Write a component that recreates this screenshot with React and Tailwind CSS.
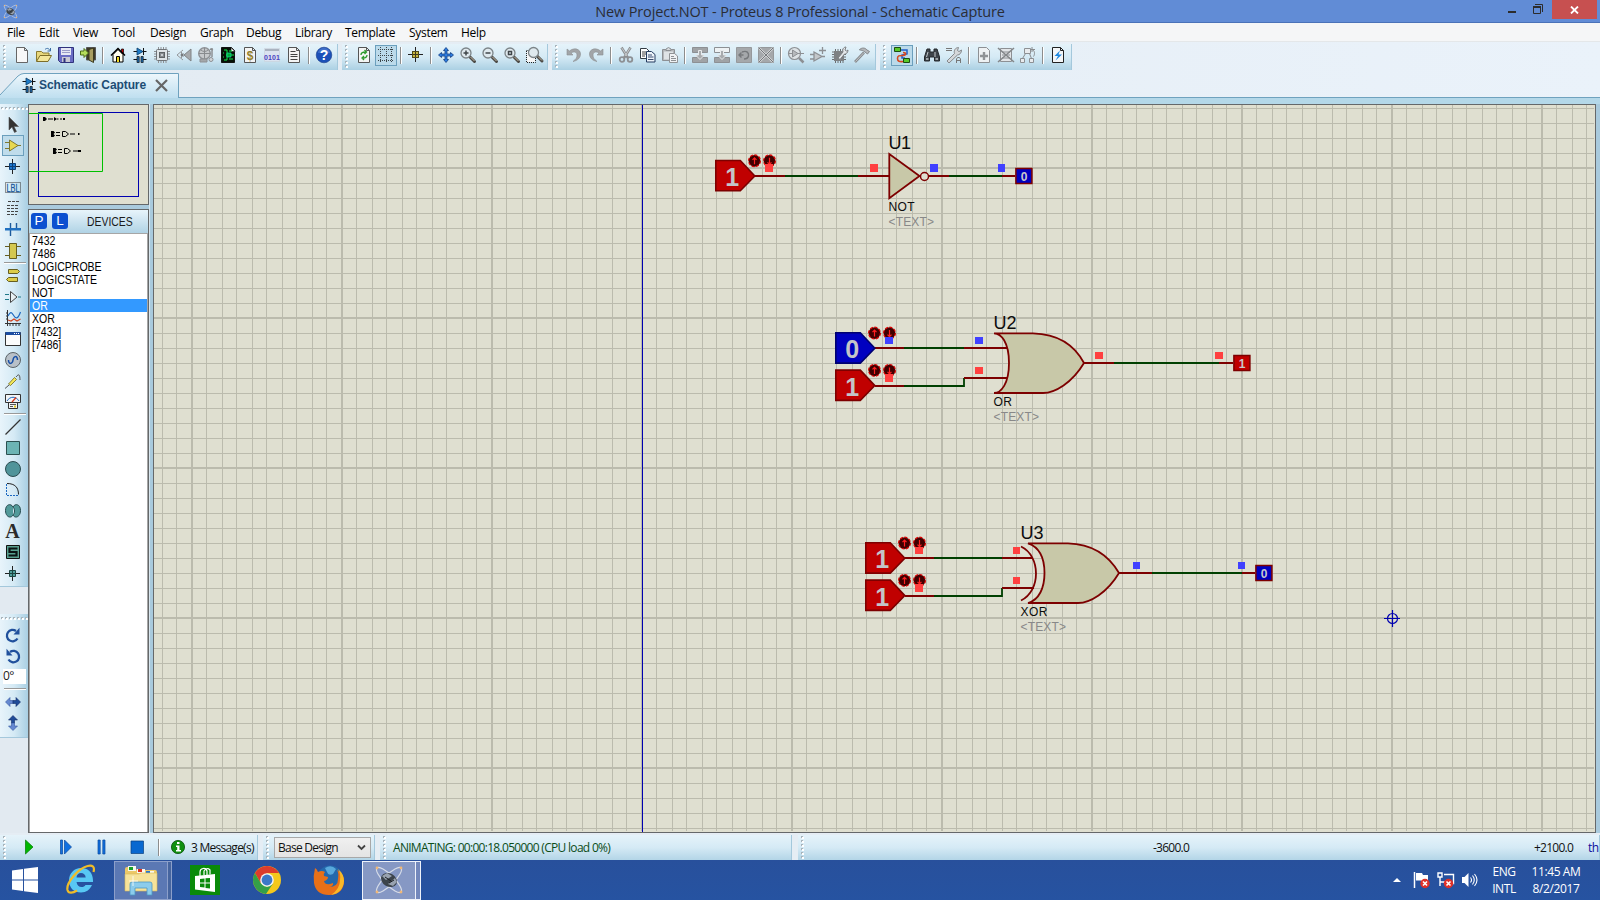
import React from "react";

const G = "#8d9094";

function Ico({ children, s = 16 }) {
  return (
    <svg width={s} height={s} viewBox="0 0 16 16" fill="none" className="shrink-0 overflow-visible">
      {children}
    </svg>
  );
}

const page = <path d="M2.5.5h8l3 3v12h-11z M10.5.5v3h3" fill="#f4f4f4" stroke="#555" />;

const icons = {
  new: <path d="M2.5.5h8l3 3v12h-11z M10.5.5v3h3" fill="#f8f8f8" stroke="#666" />,
  open: (
    <>
      <path d="M.5 14V4.500h5l1.500 1.500h6v3" fill="#e8d87c" stroke="#8a7a30" />
      <path d="M.5 14.500L4 8.500h11.500L12 14.500z" fill="#f3e79a" stroke="#7c6d28" />
      <path d="M9 2.500c2-2 4-1 5 1M14.500 1v3h-3" stroke="#3c6ea5" />
    </>
  ),
  save: (
    <>
      <path d="M.5.5h15v15h-13l-2-2z" fill="#6a6cc4" stroke="#30327c" />
      <path d="M3 1h10v7H3z" fill="#e6e8f4" />
      <path d="M4 3.500h8M4 5.500h8" stroke="#9a9cc8" />
      <path d="M4 10h8v5H4z" fill="#c8c8d4" />
      <path d="M5.500 11h2v4h-2z" fill="#30327c" />
    </>
  ),
  exit: (
    <>
      <path d="M6.500.5h9v12.500h-9z" fill="#3c3a28" stroke="#555" />
      <path d="M9 2.500l4.500-1.500v14.500L9 13z" fill="#a89e62" stroke="#3c3a20" />
      <path d="M.5 4h3.500V1.500L8.500 6 4 10.500V8H.5z" fill="#b4dc5c" stroke="#4a6a18" />
    </>
  ),
  home: (
    <>
      <path d="M11.500 2h2v5h-2z" fill="#d00000" stroke="#000" strokeWidth=".7" />
      <path d="M3 7.500L8 2.500l5 5v7.500H3z" fill="#fffef0" stroke="#000" />
      <path d="M1 8.500L8 1.500l7 7" stroke="#000" strokeWidth="1.500" />
      <path d="M6.500 15V9.500h3V15" fill="#f0d820" stroke="#000" />
    </>
  ),
  schem: (
    <>
      <path d="M1.500 4.500h13M1.500 12.500h4M11 12.500h3.500M11.500 1v7" stroke="#111" />
      <path d="M5 1l6 3.500L5 8z" fill="#1e7cc8" stroke="#0a3c68" strokeWidth=".8" />
      <path d="M5 9.500h2.200v6H5zM9 9.500h2.200v6H9z" fill="#1e6cb0" stroke="#111" strokeWidth=".7" />
    </>
  ),
  chip: (
    <>
      <path d="M4.500 0v16M7 0v16M9.500 0v16M12 0v16M0 4.500h16M0 7h16M0 9.500h16M0 12h16" stroke={G} />
      <rect x="2.500" y="2.500" width="11" height="11" rx="1" fill="#dfe4e7" stroke="#707478" />
      <rect x="5.500" y="5.500" width="5" height="5" fill="#85898d" stroke="#5f6366" />
      <path d="M7 7h2v2H7z" fill="#c8ccd0" />
    </>
  ),
  three: (
    <>
      <path d="M15 2v12L8 8z" fill="#a6a9ac" stroke="#808386" />
      <path d="M7 3L1 8l6 5M5.500 5v6" stroke="#94979a" />
      <path d="M7.500 6v4L4 8z" fill="#75787c" />
    </>
  ),
  gerber: (
    <>
      <circle cx="6.500" cy="6.500" r="5.800" fill="#c6c9cc" stroke={G} strokeWidth="1.400" />
      <path d="M1 6.500h11M6.500 1v11M3 3c2 2 5 2 7 0" stroke="#888b8e" />
      <path d="M14 1v9M12 2l3 1" stroke="#888b8e" strokeWidth="1.400" />
      <path d="M2 12h7v3H2z" fill="#a4a7aa" stroke={G} />
      <circle cx="13" cy="12.500" r="2" fill="#d2d5d8" stroke={G} />
    </>
  ),
  pcb: (
    <>
      <path d="M1.500.5h10l3 3v12h-13z" fill="#061006" stroke="#111" />
      <path d="M11 .5l4 4h-4z" fill="#f4f4f4" stroke="#111" strokeWidth=".6" />
      <path d="M4 3h3v10H4M9 4h3M9 12h4M4 6h-1M4 10h-1M6 8h8" stroke="#10e848" />
      <path d="M7 6h4v4H7z" fill="#0a3" stroke="#0ee8a0" strokeWidth=".7" />
    </>
  ),
  bom: (
    <>
      {page}
      <text x="8" y="12.500" fontSize="12" fontWeight="700" textAnchor="middle" fill="#94812a" fontFamily="Liberation Sans, sans-serif">$</text>
    </>
  ),
  code: (
    <>
      <path d="M.5 1.500h15v13H.5z" fill="#dbe3f0" stroke="#c8d0d8" strokeWidth=".6" />
      <path d="M1 2h14v2H1z" fill="#aab3c0" />
      <text x="8" y="13" fontSize="7" fontWeight="700" textAnchor="middle" fill="#4a40c0" textLength="16" fontFamily="Liberation Sans, sans-serif">0101</text>
    </>
  ),
  note: (
    <>
      {page}
      <path d="M4.500 4.500h5M4.500 7.500h7M4.500 9.500h7M4.500 12.500h7" stroke="#444" />
    </>
  ),
  help: (
    <>
      <circle cx="8" cy="8" r="7.800" fill="#1c50b8" stroke="#183c88" strokeWidth=".6" />
      <path d="M2 6a6 5 0 0112 0" fill="#5884d4" opacity=".6" />
      <text x="8" y="13" fontSize="14" fontWeight="700" textAnchor="middle" fill="#fff" fontFamily="Liberation Sans, sans-serif">?</text>
    </>
  ),
  refresh: (
    <>
      {page}
      <path d="M5 8c0-2.500 2-3 4.500-3M8.500 3l2 2-2 2M11 8c0 2.500-2 3-4 3M8 9l-2 2 2 2" stroke="#2c9a2c" strokeWidth="1.300" />
    </>
  ),
  grid: <path d="M0 2.500h16M0 8.500h16M0 13.500h16M2.500 0v16M8.500 0v16M13.500 0v16" stroke="#3c4448" strokeDasharray="1 1" shapeRendering="crispEdges" />,
  origin: (
    <>
      <path d="M0 7.500h15M7.500 0v15" stroke="#222" />
      <rect x="4.500" y="4.500" width="6" height="6" fill="#c8b840" stroke="#504818" />
      <path d="M7.500 5v5M5 7.500h5" stroke="#40381c" />
    </>
  ),
  pan: (
    <path
      d="M8 .5l2.500 3H9v3.500h3.500V5.500l3 2.500-3 2.500V9H9v3.500h1.500L8 15.500l-2.500-3H7V9H3.500v1.500L.5 8l3-2.500V7H7V3.500H5.500z"
      fill="#2c7ce0"
      stroke="#123c80"
      strokeWidth=".8"
    />
  ),
  zin: <Mag mark="M3.500 6h5M6 3.500v5" />,
  zout: <Mag mark="M3.500 6h5" />,
  zall: <Mag mark="M4.500 4.500h3v3h-3z" />,
  zarea: (
    <>
      <path d="M1 4h8v11H1z" fill="#f6f6f6" />
      <path d="M.5 4v11.500h9V11M.5 3.500h3" stroke="#222" strokeDasharray="1 1" />
      <g transform="translate(1.500 -.5)"><Mag mark="" /></g>
    </>
  ),
  undo: <path d="M1 2l0 6h6L5 6c3-2 6-1 6 2s-1 4-4 6.500c5-1 7.500-4 7.500-7.500C14.500 2 8-0 3.500 4z" fill="#a2a5a8" stroke="#8b8e91" strokeWidth=".6" />,
  redo: <path d="M15 2v6H9l2-2C8 4 5 5 5 8s1 4 4 6.500C4 13.500 1.500 10.500 1.500 7 1.500 2 8 0 12.500 4z" fill="#a2a5a8" stroke="#8b8e91" strokeWidth=".6" />,
  cut: (
    <>
      <path d="M3.500.5L10 11M12.500.5L6 11" stroke="#8b8e91" strokeWidth="2.600" />
      <path d="M3.500.5L9 9M12.500.5L7 9" stroke="#d8dadc" strokeWidth=".8" />
      <circle cx="4" cy="12.500" r="2.300" stroke={G} strokeWidth="1.800" />
      <circle cx="12" cy="12.500" r="2.300" stroke={G} strokeWidth="1.800" />
    </>
  ),
  copy: (
    <>
      <path d="M.5 1.500h6l3 3v7h-9z" fill="#fff" stroke="#333c44" />
      <path d="M2 5h4M2 7h4M2 9h3" stroke="#444" />
      <path d="M6.500 4.500h5l3.500 3v7.500H6.500z" fill="#eef4fa" stroke="#243c60" />
      <path d="M8 8h4M8 10h5.500M8 12.500h5.500" stroke="#384c70" />
    </>
  ),
  paste: (
    <>
      <path d="M.5 2.500h12v11H.5z" fill="#b4b7ba" stroke={G} />
      <path d="M2 4.500h9v8H2z" fill="#dfe3e6" />
      <path d="M4 3.500h5V2L6.500.5 4 2z" fill="#d6d9dc" stroke={G} />
      <path d="M7.500 6.500h5l3 2.500v6.500h-8z" fill="#f0f2f4" stroke="#909396" />
      <path d="M9 9.500h3M9 11.500h5M9 13.500h5" stroke={G} />
    </>
  ),
  blkcopy: <Blk top="#a0a3a6" />,
  blkmove: <Blk top="#eef2f4" />,
  blkrot: (
    <>
      <path d="M.5.5h15v15H.5z" fill="#a5a8ab" stroke="#96999c" />
      <path d="M3.500 8h4M5.500 5.500L3 8l2.500 2.500M6 5c5-2 7 1 6.500 4-.5 2-2 3-4.500 3" stroke="#75787b" strokeWidth="1.400" />
    </>
  ),
  blkdel: (
    <>
      <path d="M.5.5h15v15H.5z" fill="#a5a8ab" stroke="#96999c" />
      <path d="M1 1l14 14M15 1L1 15" stroke="#d4d6d8" strokeWidth="2.200" />
      <path d="M1 1l14 14M15 1L1 15" stroke="#75787b" />
    </>
  ),
  pick: (
    <>
      <circle cx="6.500" cy="6.500" r="6" fill="#dde2e5" stroke={G} strokeWidth="1.200" />
      <path d="M4.500 3l5.500 3.500L4.500 10zM1 6.500h3.500M10 6.500h6" fill="#b6b9bc" stroke={G} />
      <path d="M11 11l4.500 4.500" stroke={G} strokeWidth="2.500" />
    </>
  ),
  make: (
    <path d="M4 5l8 4.500L4 14zM0 7.500h4M0 12h4M12 9.500h3M12.500 0v7M9 3.500h7" fill="#c4c7ca" stroke={G} strokeWidth="1.300" />
  ),
  pack: (
    <>
      <path d="M3.500 2v14M6 2v14M8.500 2v14M11 2v14M0 5h14M0 7.500h14M0 10h14M0 12.500h14" stroke="#6b6e71" />
      <path d="M2 4h10v10H2z" fill="#7d8083" />
      <path d="M6 11l5-6c-1-3 1-5 3-5l-1 3 1.500 1L16 3c0 3-2 4-3.500 4L8 12.500z" fill="#e4e7ea" stroke="#7c7f82" />
    </>
  ),
  decomp: (
    <>
      <path d="M1 15l9-9.500" stroke="#888b8e" strokeWidth="2.600" />
      <path d="M1.500 14.500l8-8.500" stroke="#c8cbce" strokeWidth=".9" />
      <path d="M5.500 2.500C8 .5 11 .5 13 3l2.500 1.500-2 2.500L11 5C9 3.500 7.500 3 5.500 3z" fill="#b4b7ba" stroke="#85888b" />
    </>
  ),
  wire: (
    <>
      <path d="M6 3h7v4l-5 1v3h3" stroke="#2060c8" strokeWidth="1.500" />
      <path d="M9 5.500c4 0 3 3-.5 3s-5 0-5 3 2 3.500 6 3" stroke="#d84820" strokeWidth="1.600" />
      <path d="M.5.5h6v4h-6zM9.500 11.500h6v4h-6z" fill="#58c828" stroke="#1c4c10" />
    </>
  ),
  find: (
    <>
      <path d="M3 2h3v3h4V2h3l2.500 8v4h-5v-4h-5v4h-5v-4z" fill="#3e444a" stroke="#24282c" />
      <path d="M2.500 10l1.500-5M11 10V5" stroke="#c0c6ca" />
      <path d="M2 11h2.500v2H2zM11.500 11H14v2h-2.500z" fill="#a0a6aa" />
    </>
  ),
  assign: (
    <>
      <path d="M0 1.500h6M0 3.500h6" stroke="#777" />
      <path d="M1 14l7.500-7.500c-1-3 1-6 4-6l-1 3 1.500 1 2.500-1.500c0 3-2 5-4 5L3 16z" fill="#d4d7da" stroke="#85888b" />
      <path d="M10.500 16v-4l1-1.500h2l1 1.500v4M10.500 13.500h4" stroke="#777" />
    </>
  ),
  addsheet: (
    <>
      <path d="M2.500.5h8l3 3v12h-11z" fill="#eef1f3" stroke={G} />
      <path d="M8 5v8M4 9h8" stroke="#909396" strokeWidth="2.400" />
    </>
  ),
  delsheet: (
    <>
      <path d="M2.500 1.500h11v13h-11z" fill="#e2e5e8" stroke={G} />
      <path d="M4 5h8M4 8h8M4 11h8" stroke={G} />
      <path d="M0 1l16 14M16 1L0 15" stroke="#84878a" strokeWidth="1.600" />
    </>
  ),
  goto: (
    <>
      <path d="M4.500 1.500h6v5h-6zM.5 11.500h4v4h-4zM9.500 11.500h4v4h-4z" fill="#e8ebee" stroke={G} />
      <path d="M5.500 6.500l-3 5M9.500 6.500l2 5M12 2.500c3 1 3 5 1.500 7M12 0v5M10 2.500h5" stroke="#888b8e" />
    </>
  ),
  erc: (
    <>
      <path d="M2.500.5h8l3 3v12h-11z M10.5.5v3h3" fill="#f4f6f8" stroke="#222" />
      <path d="M10 3.500L4.500 9H8l-2.500 4.500L12 7.500H8.500z" fill="#1e88e0" />
    </>
  ),
};

function Mag({ mark }) {
  return (
    <>
      <path d="M9.500 9.500l5 5" stroke="#4c4a46" strokeWidth="3" strokeLinecap="round" />
      <path d="M10.500 10l4 4" stroke="#c8bca8" strokeWidth="1" />
      <circle cx="6" cy="6" r="5" fill="#dfe9ee" stroke="#7c8488" strokeWidth="1.300" />
      <path d={mark} stroke="#40464a" strokeWidth="1.500" />
    </>
  );
}

function Blk({ top }) {
  return (
    <>
      <path d="M.5.5h15v5H.5z" fill={top} stroke={G} />
      <path d="M.5 10.500h15v5H.5z" fill="#a0a3a6" stroke={G} />
      <path d="M6.500 3.500h3V8H12.500l-4.500 4.500L3.500 8h3z" fill="#a8abae" stroke="#e8ebed" />
    </>
  );
}

function Btn({ name, on }) {
  return (
    <div
      className={
        on
          ? "flex h-[21px] w-[22px] shrink-0 items-start justify-center border border-[#6b9fbd] bg-[#bbdaea] pt-[1px]"
          : "flex h-[21px] w-[22px] shrink-0 items-start justify-center pt-[2px]"
      }
    >
      <Ico>{icons[name]}</Ico>
    </div>
  );
}

const Sep = () => (
  <div className="flex w-2 shrink-0 justify-center">
    <div className="h-[17px] w-[2px] border-l border-[#8d8d8d] bg-white" />
  </div>
);

const Grip = () => (
  <svg width="3" height="26" className="shrink-0">
    {[1, 5, 9, 13, 17, 21].map((y) => (
      <g key={y}>
        <rect x="0" y={y} width="2" height="2" fill="#a9b4bb" />
        <rect x="1" y={y + 1} width="2" height="2" fill="#fff" />
      </g>
    ))}
  </svg>
);

function Bar({ w, items }) {
  return (
    <div className={`${w} flex h-[26px] shrink-0 items-center border-r border-[#a4c8dc] bg-linear-to-b from-[#e5f3fa] via-[#d5eaf5] to-[#abd0e3] pb-[3px]`}>
      <div className="flex w-[11px] shrink-0 pl-[3px] pt-[2px]"><Grip /></div>
      {items.map((n, i) => (n === "|" ? <Sep key={i} /> : <Btn key={i} name={n.replace("*", "")} on={n.endsWith("*")} />))}
    </div>
  );
}

const menu = [
  ["File", "w-[32px]"], ["Edit", "w-[34px]"], ["View", "w-[39px]"], ["Tool", "w-[38px]"], ["Design", "w-[50px]"],
  ["Graph", "w-[46px]"], ["Debug", "w-[49px]"], ["Library", "w-[50px]"], ["Template", "w-[64px]"], ["System", "w-[52px]"], ["Help", "w-[40px]"],
];

const side = {
  arrow: <path d="M4 0v13l3-3 2.500 5.500 2-1L9 9.500h4.500z" fill="#333" stroke="#555" strokeWidth=".6" />,
  comp: (
    <>
      <path d="M0 4.500h5M0 10.500h5M12 7.500h4" stroke="#807830" strokeWidth="1.200" />
      <path d="M4.500 2L13 7.500l-8.500 5.500z" fill="#e8d850" stroke="#807830" />
    </>
  ),
  junction: (
    <>
      <path d="M0 7.500h15M7.500 0v15" stroke="#222" />
      <path d="M4.500 4.500h6v6h-6z" fill="#1c78d0" stroke="#0c4078" />
      <path d="M7.500 5v5M5 7.500h5" stroke="#0c4078" />
    </>
  ),
  lbl: (
    <>
      <path d="M.5 2.500h15v10H.5z" stroke="#333" strokeDasharray="1 1" />
      <text x="8" y="11.500" fontSize="10" textAnchor="middle" fill="#1c5a9c" stroke="#1c5a9c" strokeWidth=".3" textLength="13" lengthAdjust="spacingAndGlyphs" fontFamily="Liberation Sans, sans-serif">LBL</text>
    </>
  ),
  script: <path d="M3 .5h11M2 4.500h12M2 7.500h12M2 10.500h12M2 13.500h10" stroke="#444" strokeDasharray="3 1" />,
  bus: (
    <>
      <path d="M5.500 1v7M11.500 1v7M5.500 8v6" stroke="#1c5a9c" strokeWidth="1.400" />
      <path d="M0 6h16v2.500H0z" fill="#2070c0" />
    </>
  ),
  sub: (
    <>
      <path d="M0 3.500h16M0 12.500h16" stroke="#665e20" />
      <path d="M4.500.5h7v15h-7z" fill="#d4c850" stroke="#665e20" />
    </>
  ),
  term: <path d="M3.500 1.500h9l2 2-2 2h-9zM3.500 9.500h9v4h-9l-2-2z" fill="#dccc48" stroke="#665e20" />,
  pin: (
    <>
      <path d="M5.500 2.500L12 8l-6.500 5.500z" fill="#e8f0f4" stroke="#444" />
      <path d="M0 5.500h4M0 10.500h4M13 8h3" stroke="#207888" strokeWidth="1.200" />
    </>
  ),
  graph: (
    <>
      <path d="M2.500 0v16M0 13.500h16M1 3h2M1 6h2M1 9h2M5 13v3M8 13v3M11 13v3M14 13v3" stroke="#333" />
      <path d="M3 6c3-6 4-3 6 0s4 3 6.500-4" stroke="#1c68c0" strokeWidth="1.200" />
      <path d="M3 10l3 1 3-2 3 2 3.500-2" stroke="#d04420" strokeWidth="1.200" />
    </>
  ),
  tape: (
    <>
      <path d="M.5 1.500h15v13H.5z" fill="#fbfbfb" stroke="#333" />
      <path d="M.5 1h15v3H.5z" fill="#1c4ca0" />
      <path d="M9 2.500h1M11 2.500h1M13 2.500h1" stroke="#fff" />
    </>
  ),
  gen: (
    <>
      <circle cx="8" cy="8" r="7.500" fill="#b8c0c8" stroke="#5c6468" />
      <path d="M3.500 8c0 5 4 4 4.500 0s4.500-5 4.500 0" stroke="#1850a8" strokeWidth="1.500" />
    </>
  ),
  probe: (
    <>
      <path d="M0 15.500L4 12M11 4c3-4 4-2 4 3" stroke="#555" />
      <path d="M3.500 11l6-6.500 2 2-6 6z" fill="#f4e858" stroke="#706820" strokeWidth=".8" />
    </>
  ),
  meter: (
    <>
      <path d="M.5.500h15v8h-3v6h-9v-6h-3z" fill="#f2f4f6" stroke="#333" />
      <path d="M3 8.500h10" stroke="#333" />
      <path d="M2 7c3-5 9-5 12 0" stroke="#1c68c0" />
      <path d="M7 8l4-4.500" stroke="#d83418" strokeWidth="1.300" />
      <path d="M5 10.500h6M5 12.500h3" stroke="#555" />
      <path d="M9 11.500h2v2H9z" fill="#e0c820" />
    </>
  ),
  line: <path d="M.5 15.500l15-15" stroke="#333" strokeWidth="1.300" />,
  box: <path d="M1.500 1.500h13v13h-13z" fill="#6cb4b4" stroke="#2c5050" />,
  circ: <circle cx="8" cy="8" r="7.500" fill="#50949a" stroke="#2c4c50" />,
  arc: (
    <>
      <path d="M1.500 2v11.500H14" stroke="#1c68c0" strokeDasharray="2 1" />
      <path d="M2 1.500c8 0 11.500 4 11.500 11" stroke="#222" />
    </>
  ),
  path: <path d="M8 4C6 0 .5 1 .5 7.500S6 16 8 12c2 4 7.500 2 7.500-4.500S10 0 8 4z M8 4c2 2 2 6 0 8" fill="#529a9a" stroke="#284c50" />,
  text: <text x="7.500" y="14" fontSize="20" fontWeight="700" textAnchor="middle" fill="#2c2c2c" fontFamily="Liberation Serif, serif">A</text>,
  sym: (
    <>
      <path d="M1.500.500h13v13h-13z" fill="#58a090" stroke="#111" />
      <path d="M12.500 3.500h-8v3.500h7v3.500h-8" stroke="#0a1414" strokeWidth="2.200" />
    </>
  ),
  mark: (
    <>
      <path d="M0 7.500h15M7.500 0v15" stroke="#222" />
      <path d="M4.500 4.500h6v6h-6z" fill="#50a09c" stroke="#1c4440" />
      <path d="M7.500 5v5M5 7.500h5" stroke="#1c4440" />
    </>
  ),
  cw: (
    <>
      <path d="M12.500 11.500A5.700 5.700 0 1111 4" stroke="#20509c" strokeWidth="2.300" />
      <path d="M14.500.8v6.700H8.500z" fill="#20509c" />
    </>
  ),
  ccw: (
    <>
      <path d="M3.500 11.500A5.700 5.700 0 105 4" stroke="#20509c" strokeWidth="2.300" />
      <path d="M1.500.8v6.700h6z" fill="#20509c" />
    </>
  ),
  mirx: (
    <>
      <path d="M8 6.500H5V3.500L.5 8 5 12.500v-3h3z" fill="#6488d0" stroke="#3858a0" strokeWidth=".6" />
      <path d="M8 6.500h3V3.500L15.500 8 11 12.500v-3H8z" fill="#204c98" stroke="#102c68" strokeWidth=".6" />
    </>
  ),
  miry: (
    <>
      <path d="M6.500 8V5h-3L8 .5 12.500 5h-3v3z" fill="#204c98" stroke="#102c68" strokeWidth=".6" />
      <path d="M6.500 8v3h-3L8 15.500l4.500-4.500h-3V8z" fill="#6488d0" stroke="#3858a0" strokeWidth=".6" />
    </>
  ),
};

function SBtn({ name, on }) {
  return (
    <div className={on ? "flex h-[21px] w-[22px] shrink-0 items-start justify-center border border-[#6b9fbd] bg-[#bfdceb] pt-[2px]" : "flex h-[21px] w-[22px] shrink-0 items-start justify-center pt-[3px]"}>
      <Ico>{side[name]}</Ico>
    </div>
  );
}

const HSep = () => <div className="my-[1px] ml-[2px] h-[2px] w-[22px] shrink-0 border-t border-[#999] bg-white" />;

const HGrip = () => (
  <svg width="28" height="4" className="shrink-0">
    {[1, 5, 9, 13, 17, 21, 25].map((x) => (
      <g key={x}>
        <rect x={x} y="0" width="2" height="2" fill="#a9b4bb" />
        <rect x={x + 1} y="1" width="2" height="2" fill="#fff" />
      </g>
    ))}
  </svg>
);

function Sidebar() {
  return (
    <div className="flex w-7 shrink-0 flex-col bg-[#e2eaf1]">
      <div className="flex h-[483px] shrink-0 flex-col border-b border-[#a4c8dc] bg-linear-to-r from-[#e8f4fb] via-[#d5eaf5] to-[#a9cfe3] pt-[3px]">
        <HGrip />
        <div className="flex flex-col pl-[2px] pt-[3px]">
          {["arrow", "comp*", "junction", "lbl", "script", "bus", "sub", "|", "term", "pin", "graph", "tape", "gen", "probe", "meter", "|", "line", "box", "circ", "arc", "path", "text", "sym", "mark"].map((n, i) =>
            n === "|" ? <HSep key={i} /> : <SBtn key={i} name={n.replace("*", "")} on={n.endsWith("*")} />
          )}
        </div>
      </div>
      <div className="mt-[27px] flex h-[124px] shrink-0 flex-col border-b border-[#a4c8dc] bg-linear-to-r from-[#e8f4fb] via-[#d5eaf5] to-[#a9cfe3] pt-[3px]">
        <HGrip />
        <div className="flex flex-col pl-[2px] pt-[3px]">
          <SBtn name="cw" />
          <SBtn name="ccw" />
          <div className="my-[3px] ml-[1px] h-[15px] w-[23px] bg-white font-['Open_Sans',sans-serif] text-[12px] leading-[13px] tracking-[-0.5px] text-[#222]">0°</div>
          <HSep />
          <SBtn name="mirx" />
          <SBtn name="miry" />
        </div>
      </div>
    </div>
  );
}

function Overview() {
  return (
    <svg width="121" height="101" viewBox="28 104 121 101" className="shrink-0 bg-[#dfdfd0]">
      <rect x="38.500" y="112.500" width="100" height="84" fill="none" stroke="#0000b0" />
      <path d="M29 113.500h73.500v58H29" fill="none" stroke="#00c000" />
      <g fill="#000">
        <path d="M43 117h2l2 2-2 2h-2zM48 118.500h5v1h-5zM54 117l3 2-3 2zM57 118.500h1.500v1H57zM60 118.500h2v1h-2zM63 118h2v2h-2z" />
        <path d="M51 131h2.500l1.500 1.500-1.500 1.500 1.500 1.500-1.500 1.500H51zM56 132h4v1h-4zM56 135h4v1h-4zM70 133.500h5v1h-5zM78 133h1.500v2H78z" />
        <path d="M53 148h2.500l1.500 1.500-1.500 1.500 1.500 1.500-1.500 1.500H53zM58 149h4v1h-4zM58 152h4v1h-4zM73 150.500h5v1h-5zM78 150h3v2h-3z" />
      </g>
      <path d="M62.500 131.500h3l3 2.500-3 2.500h-3zM64.500 148.500h3l3 2.500-3 2.500h-3z" fill="none" stroke="#000" />
      <rect x="28.500" y="104.500" width="120" height="100" fill="none" stroke="#65686a" />
    </svg>
  );
}

const devices = ["7432", "7486", "LOGICPROBE", "LOGICSTATE", "NOT", "OR", "XOR", "[7432]", "[7486]"];

function Devices() {
  return (
    <div className="mt-1 flex min-h-0 flex-1 flex-col border border-[#65686a] bg-white">
      <div className="flex h-6 shrink-0 items-center border-b border-[#a6a6a6] bg-linear-to-b from-[#e8f4fb] to-[#b0d3e5] pl-[2px] font-['Liberation_Sans',sans-serif]">
        <div className="mb-[1px] flex h-4 w-4 items-center justify-center rounded-[3px] bg-[#0c50d0] text-[13.500px] text-white">P</div>
        <div className="mb-[1px] ml-[5px] flex h-4 w-4 items-center justify-center rounded-[3px] bg-[#0c50d0] text-[13.500px] text-white">L</div>
        <div className="ml-[19px] w-[46px] origin-left scale-x-[.8] text-[13px] text-[#1a1a1a]">DEVICES</div>
      </div>
      <div className="flex flex-1 flex-col border-x border-[#a6a6a6]">
        {devices.map((d) => (
          <div key={d} className={d === "OR" ? "h-[13px] bg-[#3399ff] pl-[2px] text-white" : "h-[13px] pl-[2px] text-black"}>
            <div className="w-[110px] origin-left scale-x-[.81] font-['Liberation_Sans',sans-serif] text-[13px] leading-[14px]">{d}</div>
          </div>
        ))}
      </div>
    </div>
  );
}

function State({ y, x, v }) {
  return (
    <g>
      <path d={`M${x} ${y - 15.5}h24.500L${x + 39} ${y}l-14.500 14.800h-24.500z`} fill={v ? "#c00000" : "#0000c0"} stroke={v ? "#7d0000" : "#000070"} strokeWidth="1.600" />
      <text x={x + 16.5} y={y + 10} fontSize="25" fontWeight="700" textAnchor="middle" fill="#c4c4c8">{v}</text>
      {[38.7, 53.7].map((dx, i) => (
        <g key={dx} transform={`translate(${x + dx} ${y - 15.2})`}>
          <circle r="5.900" fill="#400000" stroke="#e00000" strokeWidth="1.200" strokeDasharray="3 1.500" />
          <path d={i ? "M0-3V3.500M-2 1.500L0 3.500 2 1.500" : "M0 3.500V-3M-2-1L0-3 2-1"} stroke="#ff2020" strokeWidth="1.200" fill="none" />
        </g>
      ))}
    </g>
  );
}

const Dot = ({ x, y, v, w = 8, h = 7 }) => <rect x={x} y={y} width={w} height={h} fill={v ? "#ff4040" : "#4040ff"} />;

const Probe = ({ x, y, v }) => (
  <g>
    <rect x={x + 0.9} y={y - 7.5} width="16" height="15" fill={v ? "#c00000" : "#0000c0"} stroke="#7d0000" strokeWidth="1.500" />
    <text x={x + 9} y={y + 4.5} fontSize="12" fontWeight="700" textAnchor="middle" fill="#c8c8cc">{v}</text>
  </g>
);

const Label = ({ x, y, ref1, name, w1, w2 }) => (
  <g>
    <text x={x} y={y} fontSize="18" textLength={w1} fill="#0c0c0c">{ref1}</text>
    <text x={x} y={name.y} fontSize="12" textLength={w2} fill="#0c0c0c">{name.t}</text>
    <text x={x} y={name.y + 14.5} fontSize="12" textLength="45.5" fill="#888">{"<TEXT>"}</text>
  </g>
);

const majors = [192, 342, 492, 642, 792, 942, 1092, 1242, 1392, 1542];
const offs = [14, 30, 44, 60, 74, 90, 104, 120, 134];

function Canvas() {
  const vs = [];
  [42, ...majors].forEach((m) => offs.forEach((o) => m + o > 154 && m + o < 1594 && vs.push(m + o)));
  const hs = [];
  for (let y = 108; y < 831; y += 15) hs.push(y);
  return (
    <svg width="1443" height="729" viewBox="153 104 1443 729" className="shrink-0 bg-[#dfdfd0] font-['Liberation_Sans',sans-serif]">
      <g fill="#bbbbad" shapeRendering="crispEdges">
        {vs.map((x) => <rect key={x} x={x} y="105" width="1" height="726" />)}
        {majors.map((x) => <rect key={x} x={x - 1} y="105" width="2" height="726" />)}
        {hs.map((y) => ((y - 168) % 150 === 0 ? <rect key={y} x="154" y={y - 1} width="1440" height="2" /> : <rect key={y} x="154" y={y} width="1440" height="1" />))}
      </g>
      <rect x="642" y="105" width="1" height="727" fill="#0000b0" />

      <g fill="none" stroke="#004000" strokeWidth="1.800">
        <path d="M785 176h73M949 176h54M904 348h60M904 386h60v-8M1114 363h105M934 558h68M934 596h68v-8M1152 573h90" />
      </g>
      <g fill="none" stroke="#7d0000" strokeWidth="1.800">
        <path d="M755 176h30M858 176h31M929 176h20M1002 176h13M875 348h29M964 348h44M875 386h29M964 378h44M1084 363h30M1219 363h14" />
        <path d="M905 558h29M1002 558h31M905 596h29M1002 588h32M1119 573h33M1242 573h13" />
      </g>
      <g fill="#c8c8a8" stroke="#7d0000" strokeWidth="1.800">
        <path d="M889.300 154v44.200L919.500 176z" />
        <circle cx="924.500" cy="176.500" r="4" fill="#dfdfd0" strokeWidth="1.500" />
        <path d="M994 333.300h39C1058 334 1074 344 1084 363C1072 383 1055 393 1043 393H994C1001 393 1009 384 1009 363C1009 342 1001 333.300 994 333.300z" />
        <path d="M1028 543.300h40C1092 544 1108 554 1119 573C1107 593 1090 603 1078 603H1028C1039 600 1044.500 588 1044.500 573C1044.500 557 1039 547 1028 543.300z" />
        <path d="M1021 546.500C1041 556 1041 591 1021 600.500" fill="none" />
      </g>

      <State x={715.8} y={176} v={1} />
      <State x={835.8} y={348.3} v={0} />
      <State x={835.8} y={385.6} v={1} />
      <State x={865.8} y={558.3} v={1} />
      <State x={865.8} y={595.6} v={1} />

      <Dot x={765} y={164} h={8} v={1} />
      <Dot x={870} y={164} h={8} v={1} />
      <Dot x={930} y={164} h={8} v={0} />
      <Dot x={998} y={164} w={7} h={8} v={0} />
      <Dot x={885} y={337} v={0} />
      <Dot x={885} y={374} h={8} v={1} />
      <Dot x={975} y={337} v={0} />
      <Dot x={975} y={367} v={1} />
      <Dot x={1095} y={352} v={1} />
      <Dot x={1215} y={352} v={1} />
      <Dot x={915} y={547} v={1} />
      <Dot x={915} y={584} h={8} v={1} />
      <Dot x={1013} y={547} w={7} v={1} />
      <Dot x={1013} y={577} w={7} v={1} />
      <Dot x={1133} y={562} w={7} v={0} />
      <Dot x={1238} y={562} w={7} v={0} />

      <Probe x={1015} y={176} v={0} />
      <Probe x={1233} y={363} v={1} />
      <Probe x={1255} y={573} v={0} />

      <Label x={888.5} y={149} ref1="U1" w1={22.5} w2={26} name={{ t: "NOT", y: 211 }} />
      <Label x={993.5} y={329} ref1="U2" w1={23} w2={18.5} name={{ t: "OR", y: 406 }} />
      <Label x={1020.5} y={538.5} ref1="U3" w1={23} w2={27} name={{ t: "XOR", y: 616 }} />

      <g fill="none" stroke="#0000b0" strokeWidth="1.200">
        <circle cx="1392.500" cy="618.500" r="5" />
        <path d="M1384 618.500h16M1392.500 610v17" />
      </g>
      <rect x="153.500" y="104.500" width="1442" height="728" fill="none" stroke="#65686a" />
    </svg>
  );
}

const seg = "flex h-[25px] shrink-0 items-center border-r border-[#a4c8dc] bg-linear-to-b from-[#e5f3fa] via-[#d5eaf5] to-[#b3d5e7] pl-[3px]";

function StatusBar() {
  return (
    <div className="flex h-[27px] shrink-0 items-end bg-[#e5edf4] text-[12px] tracking-[-0.4px] text-[#111]">
      <div className={`${seg} w-[258px]`}>
        <Grip />
        <svg width="16" height="16" viewBox="0 0 16 16" className="mb-[2px] ml-[16px] shrink-0"><path d="M3.500 1v14L11 8z" fill="#00b800" stroke="#007800" strokeWidth=".7" /></svg>
        <svg width="16" height="16" viewBox="0 0 16 16" className="mb-[2px] ml-[20px] shrink-0"><path d="M2.500 1h2v14h-2zM6.500 1v14L13.500 8z" fill="#1070e0" stroke="#0a489c" strokeWidth=".7" /></svg>
        <svg width="16" height="16" viewBox="0 0 16 16" className="mb-[2px] ml-[20px] shrink-0"><path d="M4 1h2.200v14H4zM8.800 1H11v14H8.800z" fill="#1070e0" stroke="#0a489c" strokeWidth=".7" /></svg>
        <svg width="16" height="16" viewBox="0 0 16 16" className="mb-[2px] ml-[19px] shrink-0"><path d="M2 2h12.500v12.500H2z" fill="#0868d0" stroke="#0a4080" strokeWidth=".7" /></svg>
        <div className="ml-[13px] h-[17px] w-[2px] shrink-0 border-l border-[#8d8d8d] bg-white" />
        <svg width="16" height="16" viewBox="0 0 16 16" className="mb-[2px] ml-[10px] shrink-0">
          <circle cx="8" cy="8" r="6.600" fill="#109010" stroke="#0a500a" strokeWidth=".8" />
          <path d="M7 3h2.500v2H7zM6 6.500h3.500V11H11v1.500H6V11h1.200V8H6z" fill="#fff" />
        </svg>
        <div className="ml-[5px] whitespace-nowrap font-['Open_Sans',sans-serif] tracking-[-0.75px]">3 Message(s)</div>
      </div>
      <div className={`${seg} ml-[5px] w-[112px]`}>
        <Grip />
        <div className="ml-[5px] flex h-[21px] w-[97px] items-center justify-between border border-[#a8a8a8] bg-linear-to-b from-[#f0f0f0] to-[#e4e4e4] pl-[3px] pr-[4px]">
          <span className="whitespace-nowrap font-['Open_Sans',sans-serif] tracking-[-0.75px]">Base Design</span>
          <svg width="9" height="7" viewBox="0 0 9 7" fill="none"><path d="M1 1.500l3.500 3.500L8 1.500" stroke="#444" strokeWidth="1.800" /></svg>
        </div>
      </div>
      <div className={`${seg} ml-[5px] w-[412px]`}>
        <Grip />
        <div className="ml-[7px] whitespace-nowrap font-['Open_Sans',sans-serif] tracking-[-0.7px] text-[#0c4c18]">ANIMATING: 00:00:18.050000 (CPU load 0%)</div>
      </div>
      <div className={`${seg} ml-[6px] flex-1 font-['Open_Sans',sans-serif] tracking-[-0.75px]`}>
        <Grip />
        <div className="ml-[349px] w-[60px]">-3600.0</div>
        <div className="ml-auto w-[54px]">+2100.0</div>
        <div className="w-[11px] tracking-[-0.5px] text-[#0c0c9c]">th</div>
      </div>
    </div>
  );
}

const Atom = ({ s }) => (
  <svg width={s} height={s} viewBox="0 0 30 30" fill="none">
    <ellipse cx="15" cy="15" rx="17" ry="5" transform="rotate(45 15 15)" stroke="#d6dce8" strokeWidth="1.200" />
    <ellipse cx="15" cy="15" rx="17" ry="5" transform="rotate(-45 15 15)" stroke="#d6dce8" strokeWidth="1.200" />
    <ellipse cx="15" cy="15" rx="8.500" ry="6.500" transform="rotate(30 15 15)" fill="#3c444c" />
    <path d="M8 11l5-3 5 3-6 4zM14 19l7-6 2 4-4 4z" fill="#98a2b0" />
    <path d="M11 12l6 4M15 18l5-3" stroke="#1c2024" />
    <circle cx="3" cy="3" r="1.400" fill="#f0b878" /><circle cx="27" cy="3" r="1.400" fill="#f0b878" />
    <circle cx="3" cy="27" r="1.400" fill="#f0b878" /><circle cx="27" cy="27" r="1.400" fill="#f0b878" />
  </svg>
);

function Taskbar() {
  return (
    <div className="flex h-10 shrink-0 items-center bg-linear-to-b from-[#28509c] to-[#2653a1] pl-3">
      <svg width="26" height="26" viewBox="0 0 26 26" fill="#fff" className="shrink-0">
        <path d="M0 3.500L11 2v10.500H0zM12 1.800L26 0v12.500H12zM0 13.500h11V24L0 22.500zM12 13.500h14V26l-14-1.800z" />
      </svg>
      <svg width="30" height="32" viewBox="0 0 30 32" fill="none" className="mb-[2px] ml-[28px] shrink-0">
        <path d="M26 22c-2 4.500-5.500 7.500-11 7.500-7.500 0-12-5-12-12S8 5 15 5s12 4.500 12 12.500v1.500H10.500c.5 3.500 2.500 5 5 5 2 0 3-.5 4-2zM10.500 14.500h9.200C19.500 11.500 17.500 10 15 10s-4.200 1.700-4.500 4.500z" fill="#58c8f4" />
        <path d="M27.500 9c1.500-5-1-7.500-6-6C12 5.500 0 20 1.500 27c1 4 5.500 3 9.500.5" stroke="#f0bc28" strokeWidth="2.200" />
      </svg>
      <div className="ml-[18px] flex h-[39px] w-[54px] shrink-0 items-center justify-center border border-[#8c9fca] bg-[#5b78b4]">
        <svg width="34" height="32" viewBox="0 0 34 32">
          <path d="M1 5q0-2 2-2h8l2 3h18q2 0 2 2v19H1z" fill="#ecc868" />
          <path d="M4 2h8v5H4z" fill="#f8f8f0" /><path d="M5 3h4v3H5z" fill="#18a028" />
          <path d="M13 5h8v4h-8z" fill="#f8f8f0" /><path d="M14 5h4v3h-4z" fill="#d83020" />
          <path d="M22 7h8v4h-8z" fill="#f8f8f0" /><path d="M22 7h4v2h-4z" fill="#2878d0" />
          <path d="M1 10h14l2-1h16v18H1z" fill="#f6e29a" stroke="#d8b858" strokeWidth=".6" />
          <path d="M6 31V20q0-2 2-2h18q2 0 2 2v11h-5v-7H11v7z" fill="#8cccec" stroke="#4c98c4" strokeWidth=".8" />
          <path d="M9 12v10M5 17h9" stroke="#fff" strokeWidth=".8" />
        </svg>
      </div>
      <div className="h-[39px] w-[4px] shrink-0 border border-l-0 border-[#8c9fca] bg-[#46659f]" />
      <div className="ml-[18px] flex h-[30px] w-[30px] shrink-0 items-center justify-center bg-[#0a8a0a]">
        <svg width="24" height="26" viewBox="0 0 24 26">
          <path d="M2 9l20-2v18L2 22.500z" fill="#fff" />
          <path d="M7 9V5q0-3 3-3.500T14 4v4M11 8V4q3-4 6-1v4.500" fill="none" stroke="#fff" strokeWidth="1.200" />
          <path d="M7 12l4.500-.5v4H7zM12.500 11.300L17 11v4.500h-4.500zM7 16.500h4.500v4L7 20zM12.500 16.500H17v5l-4.500-.6z" fill="#0a8a0a" />
        </svg>
      </div>
      <svg width="30" height="30" viewBox="0 0 30 30" className="ml-[32px] shrink-0">
        <circle cx="15" cy="15" r="14" fill="#f4c81c" />
        <path d="M2.900 8A14 14 0 0127.100 8H15L9 18.500z" fill="#dc3c2c" />
        <path d="M2.900 8A14 14 0 0014 29l7-10.500L15 22l-6-3.500z" fill="#34a048" />
        <circle cx="15" cy="15" r="6.800" fill="#f4f4f4" /><circle cx="15" cy="15" r="5.400" fill="#3c78c8" />
      </svg>
      <svg width="32" height="32" viewBox="0 0 32 32" className="ml-[31px] mr-[1px] shrink-0">
        <circle cx="17" cy="14.500" r="13" fill="#2468ac" />
        <path d="M12 4q6-4 11 1l-3 5q-5 2-6-2z" fill="#58a8dc" />
        <path d="M2 4q2 1 3 4 4-2 7 0-2 2-1 4l4 1q0 3-4 4 1 4 6 3l3-1q1 3-4 4 9 0 9-8 1-6-1-9 8 5 7 13-2 12-15 12T1 19Q0 12 2 4z" fill="#e87018" />
        <path d="M25 5q6 5 6 12-1 12-13 14 9-6 9-15 1-6-2-11z" fill="#f8b828" />
      </svg>
      <div className="ml-[16px] flex h-[39px] w-[54px] shrink-0 items-center justify-center border border-[#eef2fa] bg-[#8698c4]"><Atom s={30} /></div>
      <div className="h-[39px] w-[5px] shrink-0 border border-l-0 border-[#eef2fa] bg-[#7388bc]" />
      <svg width="8" height="4" viewBox="0 0 8 4" className="ml-auto shrink-0"><path d="M0 4L4 0l4 4z" fill="#fff" /></svg>
      <svg width="18" height="18" viewBox="0 0 18 18" fill="none" className="ml-[12px] shrink-0">
        <path d="M1.500 1v16" stroke="#fff" strokeWidth="1.500" /><path d="M3 2h6l1 2h5v7H9L8 9.500H3z" fill="#fff" />
        <circle cx="12" cy="12.500" r="4.700" fill="#e03028" /><path d="M10 10.500l4 4m0-4l-4 4" stroke="#fff" strokeWidth="1.600" />
      </svg>
      <svg width="18" height="18" viewBox="0 0 18 18" fill="none" className="ml-[6px] shrink-0">
        <path d="M1 2h4v4H1zM3 6v9M3 11h6M7 3.500h9.500v9H7" stroke="#fff" strokeWidth="1.400" />
        <circle cx="11.500" cy="12.500" r="4.700" fill="#e03028" /><path d="M9.500 10.500l4 4m0-4l-4 4" stroke="#fff" strokeWidth="1.600" />
      </svg>
      <svg width="17" height="16" viewBox="0 0 17 16" fill="none" className="ml-[6px] shrink-0">
        <path d="M1 5h2.500L7.500 1v14l-4-4H1z" fill="#fff" /><path d="M9.500 5.500q2 2.500 0 5M11.500 3.500q3.500 4.500 0 9M13.500 2q5 6 0 12" stroke="#fff" strokeWidth="1.100" />
      </svg>
      <div className="ml-[8px] w-[36px] text-center font-['Open_Sans',sans-serif] text-[12px] leading-[17px] tracking-[-0.4px] text-white">ENG<br />INTL</div>
      <div className="ml-[3px] mr-[13px] w-[62px] whitespace-nowrap text-center font-['Open_Sans',sans-serif] text-[12px] leading-[17px] tracking-[-0.4px] text-white">11:45 AM<br />8/2/2017</div>
    </div>
  );
}

export default function App() {
  return (
    <div className="flex h-[900px] w-[1600px] flex-col overflow-hidden bg-[#e3ebf2]">
      <div className="flex h-[23px] shrink-0 border-b border-[#4a72b8] bg-[#618cd6]">
        <div className="flex w-[200px] items-center pl-[3px]"><Atom s={15} /></div>
        <div className="flex flex-1 items-center justify-center whitespace-nowrap pt-[2px] font-['Open_Sans',sans-serif] text-[14.500px] tracking-[-0.150px] text-[#2a2c34]">New Project.NOT - Proteus 8 Professional - Schematic Capture</div>
        <div className="flex w-[200px] justify-end">
          <svg width="50" height="22" viewBox="1506 0 50 22" className="mr-[-4px]">
            <path d="M1508 11h8v2h-8z" fill="#2c2c2c" />
            <path d="M1533.500 6.500h7v7h-7zM1535 4.500h7.500v7.500" fill="none" stroke="#2c2c2c" />
            <path d="M1533 6h8v2h-8z" fill="#2c2c2c" />
          </svg>
          <div className="mr-[3px] flex h-[19px] w-[45px] items-center justify-center bg-[#c75050]">
            <svg width="9" height="8" viewBox="0 0 9 8"><path d="M1 .5l7 7M8 .5l-7 7" stroke="#fff" strokeWidth="1.800" /></svg>
          </div>
        </div>
      </div>
      <div className="flex h-[19px] shrink-0 items-center border-b border-[#e4e7e9] bg-[#f5f6f7] pl-[7px] pt-[2px] font-['Open_Sans',sans-serif] text-[12px] tracking-[-0.3px] text-black">
        {menu.map(([m, w]) => <div key={m} className={`${w} shrink-0`}>{m}</div>)}
      </div>
      <div className="flex h-[31px] shrink-0 bg-linear-to-r from-[#e3ebf2] to-[#eaf2fa] pt-[2px]">
        <Bar w="w-[338px]" items={["new", "open", "save", "exit", "|", "home", "schem", "chip", "three", "gerber", "pcb", "bom", "code", "note", "|", "help"]} />
        <div className="w-[4px] shrink-0" />
        <Bar w="w-[206px]" items={["refresh", "grid*", "|", "origin", "|", "pan", "zin", "zout", "zall", "zarea"]} />
        <div className="w-[4px] shrink-0" />
        <Bar w="w-[324px]" items={["undo", "redo", "|", "cut", "copy", "paste", "|", "blkcopy", "blkmove", "blkrot", "blkdel", "|", "pick", "make", "pack", "decomp"]} />
        <div className="w-[4px] shrink-0" />
        <Bar w="w-[192px]" items={["wire*", "|", "find", "assign", "|", "addsheet", "delsheet", "goto", "|", "erc"]} />
      </div>
      <div className="relative flex h-[25px] shrink-0 items-center border-b border-[#6fa2be] bg-linear-to-r from-[#e3ebf2] to-[#eaf2fa]">
        <svg width="180" height="25" viewBox="0 0 180 25" className="absolute left-0 top-0">
          <defs>
            <linearGradient id="tab" x2="0" y2="1"><stop stopColor="#eef7fc" /><stop offset="1" stopColor="#bfdff0" /></linearGradient>
          </defs>
          <path d="M0 22L18 3q3-2.500 6-2.500H178.500V25H0z" fill="url(#tab)" />
          <path d="M0 22L18 3q3-2.500 6-2.500H178.500V25" fill="none" stroke="#6fa2be" />
        </svg>
        <div className="relative flex items-center pl-[21px]">
          <Ico>{icons.schem}</Ico>
          <span className="ml-[2px] w-[107px] whitespace-nowrap font-['Liberation_Sans',sans-serif] text-[12px] font-bold tracking-[-0.1px] text-[#1d4c74]">Schematic Capture</span>
          <svg width="13" height="13" viewBox="0 0 13 13" className="ml-[9px] mt-[1px]"><path d="M1 1l11 11M12 1L1 12" stroke="#666" strokeWidth="2.200" /></svg>
        </div>
      </div>
      <div className="h-[6px] shrink-0 bg-[#b4d8e9]" />
      <div className="flex h-[729px] shrink-0 bg-[#a9cadd]">
        <Sidebar />
        <div className="flex w-[121px] shrink-0 flex-col"><Overview /><Devices /></div>
        <div className="mr-[1px] w-[3px] shrink-0 border-l border-[#d8e6ee] bg-[#a9cadd]" />
        <Canvas />
      </div>
      <StatusBar />
      <Taskbar />
    </div>
  );
}
